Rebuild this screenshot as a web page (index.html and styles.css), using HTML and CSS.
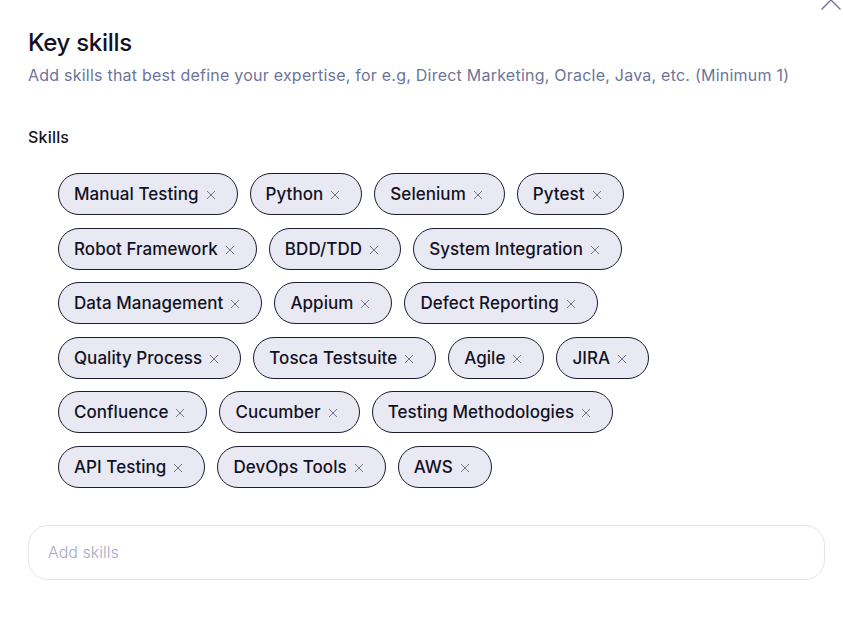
FILE: index.html
```html
<!DOCTYPE html>
<html>
<head>
<meta charset="utf-8">
<link rel="stylesheet" href="styles.css">
</head>
<body>
<div class="panel">
  <svg class="collapse" width="24" height="14" viewBox="0 0 24 14"><path d="M1.5 10.5 L11 1 L20.5 10.5" fill="none" stroke="#6d7499" stroke-width="1.4"/></svg>
  <h2 class="title">Key skills</h2>
  <p class="subtitle">Add skills that best define your expertise, for e.g, Direct Marketing, Oracle, Java, etc. (Minimum 1)</p>
  <div class="label">Skills</div>
  <div class="chips">
    <span class="chip">Manual Testing<svg class="x" viewBox="0 0 10 10"><path d="M1 1L9 9M9 1L1 9"/></svg></span>
    <span class="chip">Python<svg class="x" viewBox="0 0 10 10"><path d="M1 1L9 9M9 1L1 9"/></svg></span>
    <span class="chip">Selenium<svg class="x" viewBox="0 0 10 10"><path d="M1 1L9 9M9 1L1 9"/></svg></span>
    <span class="chip">Pytest<svg class="x" viewBox="0 0 10 10"><path d="M1 1L9 9M9 1L1 9"/></svg></span>
    <span class="chip">Robot Framework<svg class="x" viewBox="0 0 10 10"><path d="M1 1L9 9M9 1L1 9"/></svg></span>
    <span class="chip">BDD/TDD<svg class="x" viewBox="0 0 10 10"><path d="M1 1L9 9M9 1L1 9"/></svg></span>
    <span class="chip">System Integration<svg class="x" viewBox="0 0 10 10"><path d="M1 1L9 9M9 1L1 9"/></svg></span>
    <span class="chip">Data Management<svg class="x" viewBox="0 0 10 10"><path d="M1 1L9 9M9 1L1 9"/></svg></span>
    <span class="chip">Appium<svg class="x" viewBox="0 0 10 10"><path d="M1 1L9 9M9 1L1 9"/></svg></span>
    <span class="chip">Defect Reporting<svg class="x" viewBox="0 0 10 10"><path d="M1 1L9 9M9 1L1 9"/></svg></span>
    <span class="chip">Quality Process<svg class="x" viewBox="0 0 10 10"><path d="M1 1L9 9M9 1L1 9"/></svg></span>
    <span class="chip">Tosca Testsuite<svg class="x" viewBox="0 0 10 10"><path d="M1 1L9 9M9 1L1 9"/></svg></span>
    <span class="chip">Agile<svg class="x" viewBox="0 0 10 10"><path d="M1 1L9 9M9 1L1 9"/></svg></span>
    <span class="chip">JIRA<svg class="x" viewBox="0 0 10 10"><path d="M1 1L9 9M9 1L1 9"/></svg></span>
    <span class="chip">Confluence<svg class="x" viewBox="0 0 10 10"><path d="M1 1L9 9M9 1L1 9"/></svg></span>
    <span class="chip">Cucumber<svg class="x" viewBox="0 0 10 10"><path d="M1 1L9 9M9 1L1 9"/></svg></span>
    <span class="chip">Testing Methodologies<svg class="x" viewBox="0 0 10 10"><path d="M1 1L9 9M9 1L1 9"/></svg></span>
    <span class="chip">API Testing<svg class="x" viewBox="0 0 10 10"><path d="M1 1L9 9M9 1L1 9"/></svg></span>
    <span class="chip">DevOps Tools<svg class="x" viewBox="0 0 10 10"><path d="M1 1L9 9M9 1L1 9"/></svg></span>
    <span class="chip">AWS<svg class="x" viewBox="0 0 10 10"><path d="M1 1L9 9M9 1L1 9"/></svg></span>
  </div>
  <div class="input-box">Add skills</div>
</div>
</body>
</html>
```
FILE: styles.css
```css
* { box-sizing: border-box; }
html, body { margin: 0; padding: 0; background: #fff; }
body { font-family: Inter, "Noto Sans", sans-serif; color: #121224; }
.panel { position: relative; padding: 29px 18px 0 28px; width: 843px; height: 630px; }
.collapse { position: absolute; right: -1px; top: -1px; }
.title { margin: 0; font-size: 24px; font-weight: 500; line-height: 28px; color: #121224; letter-spacing: -0.3px; }
.subtitle { margin: 8px 0 0; font-size: 16px; line-height: 20px; color: #6d7499; letter-spacing: 0.23px; }
.label { margin-top: 42px; font-size: 16px; font-weight: 500; line-height: 20px; color: #121224; letter-spacing: 0.2px; }
.chips { display: flex; flex-wrap: wrap; gap: 12.6px 12px; padding: 26px 0 0 30px; width: 700px; }
.chip { display: inline-flex; align-items: center; height: 42px; padding: 0 21px 0 15px; border: 1px solid #1c1c30; border-radius: 22px; background: #e9e9f4; font-size: 17px; font-weight: 450; color: #121224; white-space: pre; letter-spacing: 0.05px; }
.x { width: 10px; height: 10px; margin-left: 7px; margin-top: 2px; fill: none; stroke: #74748a; stroke-width: 1; }
.input-box { margin-top: 37px; height: 55px; width: 797px; border: 1px solid #e3e3f0; border-radius: 20px; padding: 0 19px; display: flex; align-items: center; font-size: 16px; font-weight: 300; color: #a3a8c8; }
```
